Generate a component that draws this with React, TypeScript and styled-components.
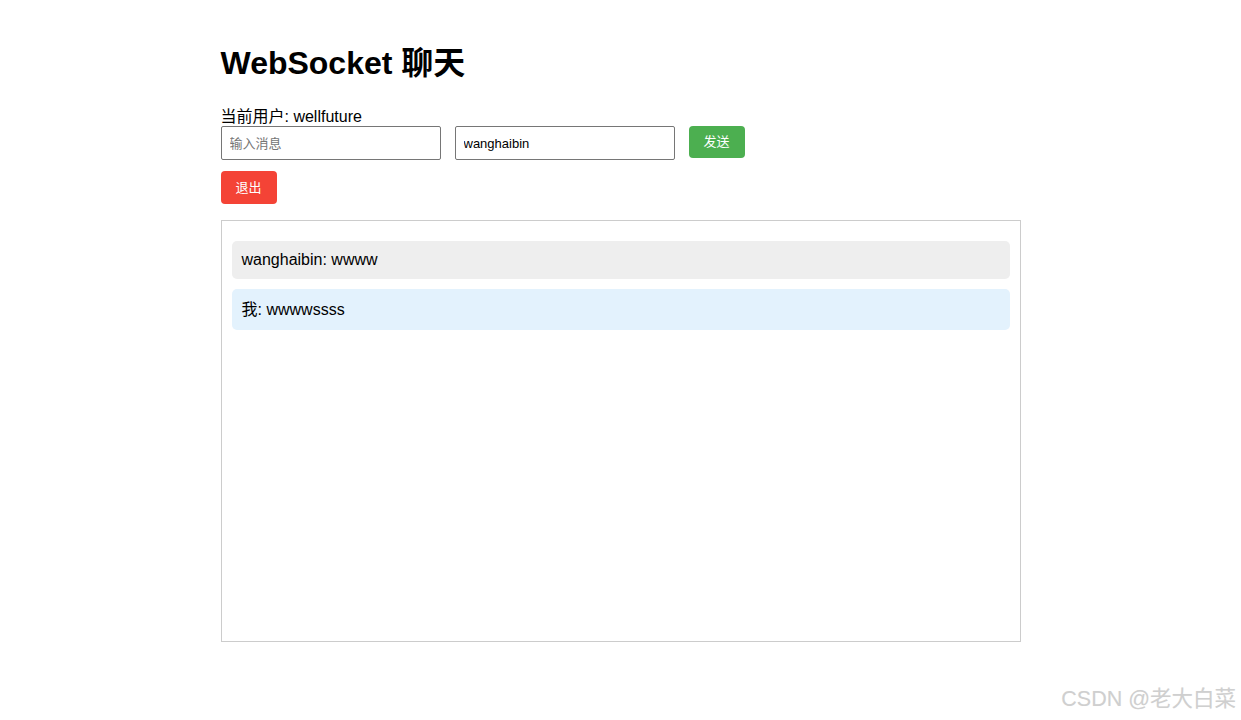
import React, {FunctionComponent} from "react";
import styled, {createGlobalStyle} from "styled-components";

const GlobalStyle = createGlobalStyle`
  html, body {
    margin: 0;
    padding: 0;
    background: #ffffff;
    font-family: "Liberation Sans", Arial, "Noto Sans CJK SC", sans-serif;
    color: #000;
  }
`;

type Message = {from: string; text: string; mine: boolean};

const messages: Message[] = [
    {from: "wanghaibin", text: "wwww", mine: false},
    {from: "我", text: "wwwwssss", mine: true},
];

const App: FunctionComponent = () => {
    return (
    <Page>
        <GlobalStyle />
        <Container>
            <Title>WebSocket 聊天</Title>
            <UserLine>当前用户: wellfuture</UserLine>
            <Controls>
                <TextInput placeholder="输入消息" />
                <TextInput defaultValue="wanghaibin" />
                <ActionButton $color="#4CAF50">发送</ActionButton>
            </Controls>
            <ActionButton $color="#f44336" $top>退出</ActionButton>
            <ChatBox>
                {messages.map((m, i) => (
                    <Bubble key={i} $mine={m.mine}>{m.from}: {m.text}</Bubble>
                ))}
            </ChatBox>
        </Container>
        <Watermark>CSDN @老大白菜</Watermark>
    </Page>
    );
};

export default App;

const Page = styled.div`
  position: relative;
  min-height: 720px;
  padding: 21px 0;
  box-sizing: border-box;
`;

const Container = styled.div`
  max-width: 800px;
  margin: 0 auto;
`;

const Title = styled.h1`
  font-size: 32px;
  font-weight: 700;
  line-height: 37px;
  margin: 24px 0 26px;
`;

const UserLine = styled.div`
  font-size: 16px;
  line-height: 18px;
`;

const Controls = styled.div`
  display: flex;
  align-items: flex-start;
  gap: 14px;
`;

const TextInput = styled.input`
  width: 220px;
  height: 34px;
  box-sizing: border-box;
  padding: 8px;
  border: 1px solid #767676;
  border-radius: 2px;
  font-family: "Liberation Sans", Arial, "Noto Sans CJK SC", sans-serif;
  font-size: 13px;
  color: #000;
  outline: none;
  &::placeholder {
    color: #757575;
  }
`;

const ActionButton = styled.button<{$color: string; $top?: boolean}>`
  display: block;
  margin-top: ${p => p.$top ? "11px" : "0"};
  padding: 8px 15px;
  height: ${p => p.$top ? "33px" : "32px"};
  border: none;
  border-radius: 4px;
  background: ${p => p.$color};
  color: white;
  font-family: "Liberation Sans", Arial, "Noto Sans CJK SC", sans-serif;
  font-size: 13px;
  line-height: 16px;
  cursor: pointer;
`;

const ChatBox = styled.div`
  margin-top: 16px;
  height: 400px;
  padding: 10px;
  border: 1px solid #ccc;
  overflow-y: auto;
`;

const Bubble = styled.div<{$mine: boolean}>`
  margin: 10px 0;
  padding: 10px;
  border-radius: 5px;
  font-size: 16px;
  line-height: ${p => p.$mine ? "21px" : "18px"};
  background: ${p => p.$mine ? "#e3f2fd" : "#eeeeee"};
`;

const Watermark = styled.div`
  position: absolute;
  right: 5px;
  bottom: 8px;
  font-family: "Liberation Sans", Arial, "Noto Sans CJK SC", sans-serif;
  font-size: 21.5px;
  font-weight: 400;
  color: #cfcfcf;
  text-shadow: 0 0 1px rgba(0, 0, 0, 0.06);
`;
